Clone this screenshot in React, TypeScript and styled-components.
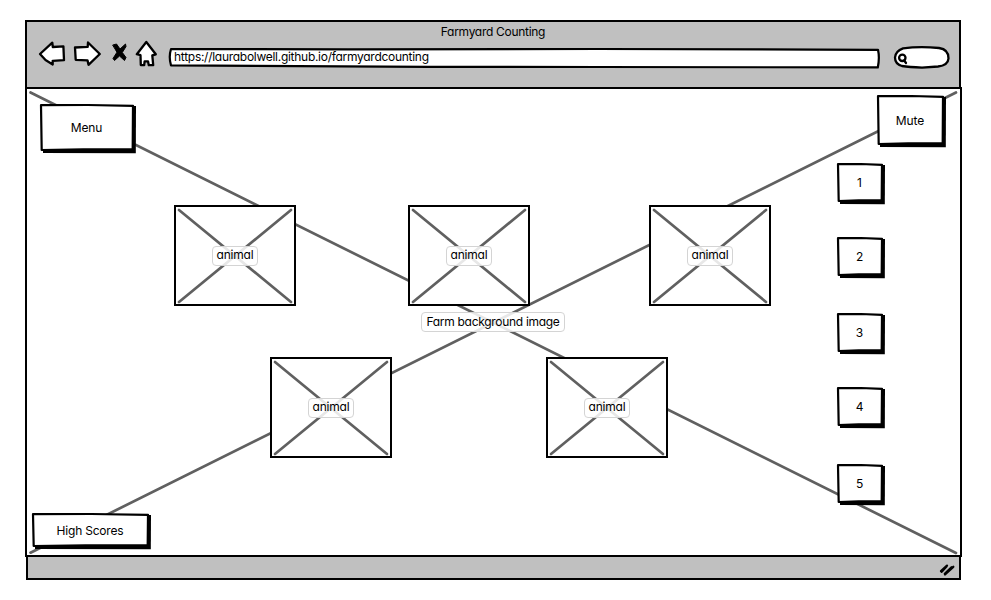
import React from "react";
import styled, { createGlobalStyle } from "styled-components";

const GlobalStyle = createGlobalStyle`
  body {
    margin: 0;
    background: #fff;
    overflow: hidden;
  }
`;

const Page = styled.div`
  width: 991px;
  height: 600px;
  box-sizing: border-box;
  padding: 20px 0 0 25px;
  background: #fff;
  color: #000;
  font-family: Inter, "Open Sans", sans-serif;
  font-feature-settings: "cv11";
  font-size: 12px;
  line-height: 16px;
`;

const Text = styled.span<{ $spacing?: number }>`
  letter-spacing: ${(p) => p.$spacing ?? -0.1}px;
  white-space: nowrap;
`;

const Header = styled.header`
  width: 936px;
  height: 67px;
  box-sizing: border-box;
  border: 2px solid #000;
  border-bottom: 0;
  background: #c0c0c0;
  display: flex;
  flex-direction: column;
`;

const Title = styled.div`
  height: 18px;
  padding-top: 2px;
  box-sizing: border-box;
  text-align: center;
`;

const Toolbar = styled.div`
  display: flex;
  height: 30px;
  padding-left: 11px;
`;

const Icon = styled.svg<{ $gap?: number }>`
  display: block;
  flex: none;
  margin-right: ${(p) => p.$gap ?? 0}px;
  overflow: visible;
  stroke: #000;
  stroke-width: 2.3;
  stroke-linejoin: round;
  stroke-linecap: round;
  fill: #fff;
`;

const AddressBar = styled.div`
  position: relative;
  width: 713px;
  height: 30px;
  margin-right: 12px;
  padding: 9px 0 0 6px;
  box-sizing: border-box;
`;

const Backdrop = styled.svg`
  position: absolute;
  left: 0;
  top: 0;
  overflow: visible;
`;

const Label = styled(Text)`
  position: relative;
`;

const Viewport = styled.main`
  position: relative;
  width: 937px;
  height: 470px;
  box-sizing: border-box;
  border: 2px solid #000;
  display: flex;
  justify-content: space-between;
  padding: 0 14px 0 5px;
`;

const SideColumn = styled.div`
  position: relative;
  display: flex;
  flex-direction: column;
  justify-content: space-between;
  align-items: flex-start;
  width: 120px;
  padding: 15px 0 6px;
  box-sizing: border-box;
`;

const MenuSlot = styled.div`
  padding-left: 8px;
`;

const Field = styled.div`
  position: relative;
  flex: 1;
  padding: 116px 0 0 22px;
`;

const AnimalRow = styled.div<{ $indent: number; $columns: string }>`
  display: grid;
  grid-template-columns: ${(p) => p.$columns};
  padding-left: ${(p) => p.$indent}px;
  margin-bottom: 51px;
`;

const AnimalFrame = styled.div`
  position: relative;
  width: 122px;
  height: 101px;
  box-sizing: border-box;
  border: 2px solid #000;
  background: #fff;
  display: flex;
  align-items: center;
  justify-content: center;
`;

const Tag = styled.span`
  position: relative;
  box-sizing: border-box;
  height: 20px;
  border: 1px solid #d4d4d4;
  border-radius: 4px;
  background: rgba(255, 255, 255, 0.85);
  line-height: 17px;
  text-align: center;
  white-space: nowrap;
`;

const AnimalTag = styled(Tag)`
  width: 46px;
  line-height: 15px;
`;

const BackgroundTag = styled(Tag)`
  position: absolute;
  left: 394px;
  top: 223px;
  width: 144px;
`;

const Controls = styled.div`
  position: relative;
  width: 109px;
  padding-top: 6px;
`;

const MuteSlot = styled.div`
  display: flex;
  justify-content: flex-end;
  height: 68px;
`;

const NumberSlot = styled.div<{ $height: number }>`
  height: ${(p) => p.$height}px;
`;

const ButtonBox = styled.button<{ $w: number; $h: number }>`
  position: relative;
  display: flex;
  align-items: center;
  justify-content: center;
  width: ${(p) => p.$w}px;
  height: ${(p) => p.$h}px;
  padding: 0 3px 1px 0;
  border: 0;
  background: none;
  color: inherit;
  font: inherit;
  font-feature-settings: inherit;
`;

const Footer = styled.footer`
  width: 935px;
  height: 23px;
  margin-left: 1px;
  box-sizing: border-box;
  border: 2px solid #000;
  border-top: 0;
  background: #c0c0c0;
  display: flex;
  justify-content: flex-end;
`;

function SketchButton({ w, h, label, spacing }: { w: number; h: number; label: string; spacing?: number }) {
  return (
    <ButtonBox $w={w} $h={h}>
      <Backdrop width={w} height={h}>
        <path d={`M3 ${h - 4} L${w - 4} 2 L${w} 2 L${w - 0.2} ${h + 0.3} L3 ${h} Z`} fill="#000" />
        <path
          d={`M1 1.2 L${w * 0.5} 1 L${w - 3} 1.8 L${w - 3.3} ${h - 4} L${w * 0.45} ${h - 3.6} L1.7 ${h - 3} Z`}
          fill="#fff"
          stroke="#000"
          strokeWidth="2.2"
          strokeLinejoin="round"
        />
      </Backdrop>
      <Label $spacing={spacing}>{label}</Label>
    </ButtonBox>
  );
}

function Animal() {
  return (
    <AnimalFrame>
      <Backdrop width="118" height="97" stroke="#606060" strokeWidth="2.7" strokeLinecap="round">
        <path d="M3 3 L115 95 M115 3 L3 95" />
      </Backdrop>
      <AnimalTag>
        <Text $spacing={-0.2}>animal</Text>
      </AnimalTag>
    </AnimalFrame>
  );
}

const numbers = [
  { value: "1", height: 74 },
  { value: "2", height: 76 },
  { value: "3", height: 74 },
  { value: "4", height: 77 },
  { value: "5", height: 41 },
];

export default function App() {
  return (
    <Page>
      <GlobalStyle />
      <Header>
        <Title>
          <Text $spacing={-0.29}>Farmyard Counting</Text>
        </Title>
        <Toolbar>
          <Icon width="28" height="30" viewBox="38 40 28 30" $gap={7}>
            <path d="M40 54 L52.3 42.7 L52.8 47 L63.4 46.3 L64 60.2 L52.7 60.8 L52.7 64.5 L45.5 60 Z" />
          </Icon>
          <Icon width="28" height="30" viewBox="73 40 28 30" $gap={10}>
            <path d="M75 47.5 L87.7 46.8 L88 42.5 L99.8 54 L88.5 64.8 L87.5 60.3 L75.7 59.8 Z" />
          </Icon>
          <Icon width="17" height="30" viewBox="111 40 17 30" $gap={7}>
            <path
              d="M113 45 L116.5 44 L120 49 L125.5 44 L126 46.5 L122.3 52.5 L126 57.5 L124.5 60.5 L119.5 56 L114.5 60.5 L113 58.5 L116.8 52.5 Z"
              fill="#000"
              strokeWidth="1"
            />
          </Icon>
          <Icon width="23" height="30" viewBox="135 40 23 30" $gap={10}>
            <path d="M146.3 42 L155.8 54.3 L152.3 55.4 L153.2 65 L148.8 65.2 L148 61.3 L144.6 61.3 L144.2 65.2 L140.8 65 L140.5 55.2 L136.8 54.2 Z" />
          </Icon>
          <AddressBar>
            <Backdrop width="713" height="30">
              <path
                d="M3 9 L180 9.3 L430 9 L710 9.8 Q711.8 18 709.8 27.4 L430 27 L260 26.8 L3 25.4 Q0.5 17 3 9 Z"
                fill="#fff"
                stroke="#000"
                strokeWidth="2.2"
                strokeLinejoin="round"
              />
            </Backdrop>
            <Label $spacing={-0.28}>https://laurabolwell.github.io/farmyardcounting</Label>
          </AddressBar>
          <Icon width="58" height="30" viewBox="893 40 58 30">
            <path d="M903 48.3 Q920 46.2 939 48 Q948.8 49.5 948.5 58.5 Q948 65.5 938 66.5 L922 67.7 Q909 67 902 66 Q895 64 895 57.5 Q895.5 51 903 48.3 Z" />
            <circle cx="902.3" cy="57.8" r="3.2" />
            <path d="M904.2 60.5 L906 63" />
          </Icon>
        </Toolbar>
      </Header>
      <Viewport>
        <Backdrop width="933" height="466" stroke="#606060" strokeWidth="2.7" strokeLinecap="round">
          <path d="M3.5 3.5 L929 464 M929 3.5 L3.5 463.7" />
        </Backdrop>
        <SideColumn>
          <MenuSlot>
            <SketchButton w={96} h={49} label="Menu" />
          </MenuSlot>
          <SketchButton w={119} h={36} label="High Scores" spacing={-0.2} />
        </SideColumn>
        <Field>
          <AnimalRow $indent={0} $columns="234px 241px 122px">
            <Animal />
            <Animal />
            <Animal />
          </AnimalRow>
          <AnimalRow $indent={96} $columns="276px 122px">
            <Animal />
            <Animal />
          </AnimalRow>
        </Field>
        <Controls>
          <MuteSlot>
            <SketchButton w={69} h={52} label="Mute" />
          </MuteSlot>
          {numbers.map((n) => (
            <NumberSlot key={n.value} $height={n.height}>
              <SketchButton w={48} h={41} label={n.value} />
            </NumberSlot>
          ))}
        </Controls>
        <BackgroundTag>
          <Text $spacing={-0.3}>Farm background image</Text>
        </BackgroundTag>
      </Viewport>
      <Footer>
        <Icon width="20" height="20" viewBox="941 557 20 20">
          <path d="M943 571.2 L949 565.6 M943.7 571.8 L948.5 566.5 M947 574.5 L955.3 566.8 M946.8 573.8 L953.5 567.2" />
        </Icon>
      </Footer>
    </Page>
  );
}
